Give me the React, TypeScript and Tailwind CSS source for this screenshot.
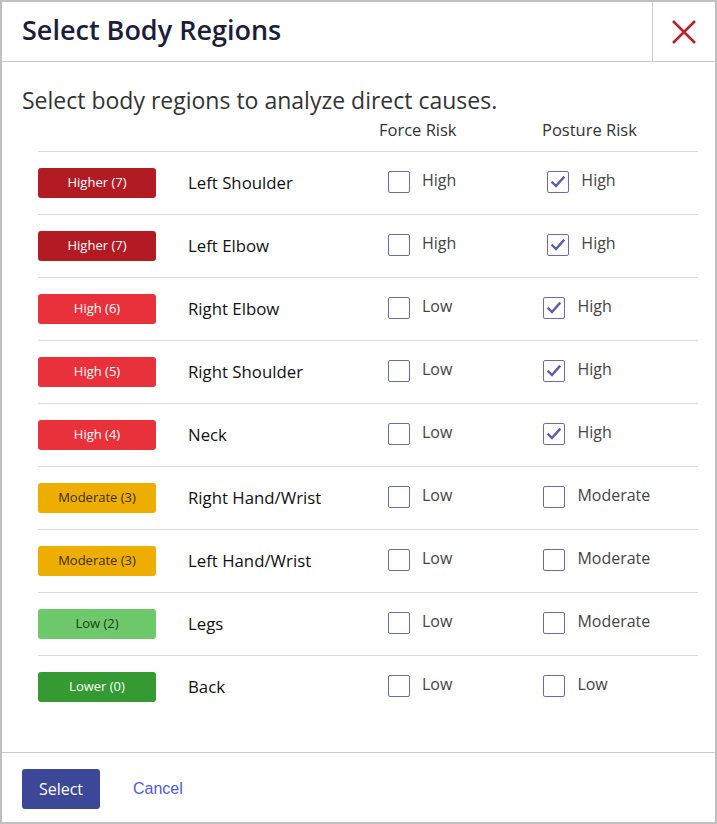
import type { ReactNode } from "react";

type Row = {
  level: string;
  badge: string;
  region: string;
  force: { label: string; checked: boolean };
  posture: { label: string; checked: boolean };
};

const BADGE: Record<string, string> = {
  Higher: "bg-[#b31b24] text-white",
  High: "bg-[#e8313a] text-white",
  Moderate: "bg-[#eeae00] text-[#3b2d00]",
  Low: "bg-[#6ec96b] text-[#1f3a1f]",
  Lower: "bg-[#349a31] text-white",
};

const ROWS: Row[] = [
  { level: "Higher", badge: "Higher (7)", region: "Left Shoulder", force: { label: "High", checked: false }, posture: { label: "High", checked: true } },
  { level: "Higher", badge: "Higher (7)", region: "Left Elbow", force: { label: "High", checked: false }, posture: { label: "High", checked: true } },
  { level: "High", badge: "High (6)", region: "Right Elbow", force: { label: "Low", checked: false }, posture: { label: "High", checked: true } },
  { level: "High", badge: "High (5)", region: "Right Shoulder", force: { label: "Low", checked: false }, posture: { label: "High", checked: true } },
  { level: "High", badge: "High (4)", region: "Neck", force: { label: "Low", checked: false }, posture: { label: "High", checked: true } },
  { level: "Moderate", badge: "Moderate (3)", region: "Right Hand/Wrist", force: { label: "Low", checked: false }, posture: { label: "Moderate", checked: false } },
  { level: "Moderate", badge: "Moderate (3)", region: "Left Hand/Wrist", force: { label: "Low", checked: false }, posture: { label: "Moderate", checked: false } },
  { level: "Low", badge: "Low (2)", region: "Legs", force: { label: "Low", checked: false }, posture: { label: "Moderate", checked: false } },
  { level: "Lower", badge: "Lower (0)", region: "Back", force: { label: "Low", checked: false }, posture: { label: "Low", checked: false } },
];

const FONT = { fontFamily: '"Open Sans", "Noto Sans", sans-serif' };

function Check({ label, checked }: { label: string; checked: boolean }) {
  return (
    <label className="flex items-center gap-3 -mt-[3px]">
      <span className="flex h-[22px] w-[22px] items-center justify-center rounded-[2px] border-[1.5px] border-[#6a6ab6] bg-white">
        {checked && (
          <svg width="16" height="16" viewBox="0 0 16 16" fill="none">
            <path d="M2.5 8.5 L6 12 L13.5 3.5" stroke="#5d5dab" strokeWidth="2.4" strokeLinecap="square" strokeLinejoin="miter" />
          </svg>
        )}
      </span>
      <span className="pb-1 text-[16px] text-[#444]">{label}</span>
    </label>
  );
}

function Cell({ children, className = "" }: { children: ReactNode; className?: string }) {
  return <div className={`flex items-center ${className}`}>{children}</div>;
}

export default function App() {
  return (
    <div className="flex h-[824px] w-[717px] flex-col border-2 border-[#bfbfbf] bg-white" style={FONT}>
      {/* Header */}
      <div className="flex h-[60px] shrink-0 border-b border-[#c9c9d6]">
        <h1 className="flex flex-1 items-center pl-5 pb-[2px] text-[27px] font-semibold text-[#1b1d3a]">Select Body Regions</h1>
        <button className="flex w-[63px] items-center justify-center border-l border-[#c9c9d6]">
          <svg width="26" height="26" viewBox="0 0 26 26">
            <path d="M2 2 L24 24 M24 2 L2 24" stroke="#b8222c" strokeWidth="2.6" />
          </svg>
        </button>
      </div>

      {/* Body */}
      <div className="flex-1">
        <p className="mt-6 pl-5 text-[23px] leading-[28px] text-[#333]">Select body regions to analyze direct causes.</p>

        <div className="ml-9 mr-[17px]">
          <div className="grid grid-cols-[150px_200px_159px_1fr] pt-[5px] pb-[10px] text-[16.5px] leading-[22px] text-[#333]">
            <div />
            <div />
            <div className="-ml-[9px]">Force Risk</div>
            <div className="-ml-[5px]">Posture Risk</div>
          </div>

          {ROWS.map((r, i) => (
            <div key={i} className="grid h-[63px] grid-cols-[150px_200px_1fr] border-t border-[#dcdce8]">
              <Cell>
                <span className={`flex h-[30px] w-[118px] items-center justify-center rounded-[3px] text-[13px] ${BADGE[r.level]}`}>
                  {r.badge}
                </span>
              </Cell>
              <Cell className="text-[16.8px] text-[#111]">{r.region}</Cell>
              <Cell className="gap-[91px]">
                <Check {...r.force} />
                <Check {...r.posture} />
              </Cell>
            </div>
          ))}
        </div>
      </div>

      {/* Footer */}
      <div className="flex h-[70px] shrink-0 items-start gap-[33px] border-t border-[#c9c9d6] pl-5 pt-4">
        <button className="h-10 w-[78px] rounded-[3px] bg-[#3d4797] text-[16px] text-white">Select</button>
        <button className="h-10 text-[16px] text-[#4f5bd5]" style={{ fontFamily: '"Liberation Sans", Arial, sans-serif' }}>
          Cancel
        </button>
      </div>
    </div>
  );
}
